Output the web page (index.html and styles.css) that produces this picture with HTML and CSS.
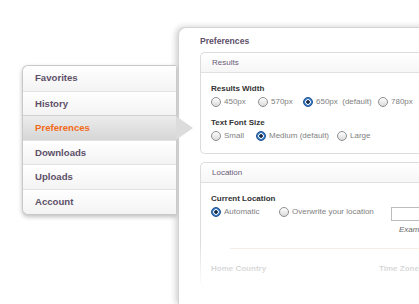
FILE: index.html
```html
<!DOCTYPE html>
<html>
<head>
    <title>Preferences</title>
    <link rel="stylesheet" href="styles.css">
</head>
<body>
    <div class="stage">
        <!-- Left navigation -->
        <ul class="nav">
            <li>Favorites</li>
            <li>History</li>
            <li class="active">Preferences</li>
            <li>Downloads</li>
            <li>Uploads</li>
            <li>Account</li>
        </ul>

        <!-- Preferences panel -->
        <div class="panel">
            <h1>Preferences</h1>

            <div class="box">
                <div class="box-head">Results</div>
                <div class="box-body">
                    <div class="field">
                        <h3>Results Width</h3>
                        <div class="options">
                            <span class="opt w1"><i class="radio"></i>450px</span>
                            <span class="opt w2"><i class="radio"></i>570px</span>
                            <span class="opt w3"><i class="radio on"></i>650px&nbsp;&nbsp;(default)</span>
                            <span class="opt"><i class="radio"></i>780px</span>
                        </div>
                    </div>
                    <div class="field">
                        <h3>Text Font Size</h3>
                        <div class="options">
                            <span class="opt w4"><i class="radio"></i>Small</span>
                            <span class="opt w5"><i class="radio on"></i>Medium (default)</span>
                            <span class="opt"><i class="radio"></i>Large</span>
                        </div>
                    </div>
                </div>
            </div>

            <div class="box">
                <div class="box-head">Location</div>
                <div class="box-body">
                    <div class="field">
                        <h3>Current Location</h3>
                        <div class="options loc">
                            <span class="opt w6"><i class="radio on"></i>Automatic</span>
                            <span class="opt w7"><i class="radio"></i>Overwrite your location</span>
                            <div class="loc-input">
                                <input type="text">
                                <em>Example</em>
                            </div>
                        </div>
                    </div>
                    <hr class="sep">
                    <div class="cols">
                        <h3>Home Country</h3>
                        <h3>Time Zone</h3>
                    </div>
                </div>
            </div>
            <div class="fade"></div>
        </div>
    </div>
</body>
</html>
```

FILE: styles.css
```css
/* General Reset */
* {
    margin: 0;
    padding: 0;
    box-sizing: border-box;
}
body {
    font-family: 'Liberation Sans', Arial, sans-serif;
    background: #ffffff;
    width: 419px;
    height: 304px;
    overflow: hidden;
}
.stage {
    display: flex;
    align-items: flex-start;
    padding-left: 22px;
}

/* Navigation */
.nav {
    list-style: none;
    width: 154px;
    flex-shrink: 0;
    margin-top: 65px;
    background: #fafafa;
    border: 1px solid #c9c9c9;
    border-right: none;
    border-radius: 6px 0 0 6px;
    box-shadow: 0 2px 4px rgba(0, 0, 0, 0.25);
    position: relative;
    z-index: 2;
}
.nav li {
    height: 24.6px;
    line-height: 24px;
    padding-left: 12px;
    font-size: 9.6px;
    font-weight: bold;
    color: #5d4f68;
    border-top: 1px solid #e2e2e2;
    background: linear-gradient(#ffffff, #f3f3f3);
    position: relative;
}
.nav li:first-child {
    border-top: none;
    border-radius: 6px 0 0 0;
}
.nav li:last-child {
    border-radius: 0 0 0 6px;
}
.nav li.active {
    color: #f26a1b;
    background: linear-gradient(#ececec, #d6d6d6);
    border-top-color: #d0d0d0;
}
.nav li.active::after {
    content: '';
    position: absolute;
    right: -17px;
    top: 0;
    border-left: 17px solid #dcdcdc;
    border-top: 12px solid transparent;
    border-bottom: 12px solid transparent;
}

/* Panel */
.panel {
    position: relative;
    margin-top: 27px;
    margin-left: 2px;
    width: 300px;
    height: 277px;
    flex-shrink: 0;
    background: #ffffff;
    border: 1px solid #d4d4d4;
    border-right: none;
    border-bottom: none;
    border-radius: 8px 0 0 0;
    box-shadow: -2px 0 6px rgba(0, 0, 0, 0.2);
    padding: 7px 0 0 21px;
    overflow: hidden;
}
.panel h1 {
    font-size: 8.6px;
    line-height: 12px;
    font-weight: bold;
    color: #5d4f68;
    margin-bottom: 5px;
}
.box {
    border: 1px solid #dcdcdc;
    border-right: none;
    border-radius: 5px 0 0 5px;
    margin-bottom: 8px;
}
.box-head {
    height: 20px;
    line-height: 19px;
    padding-left: 11px;
    font-size: 8px;
    color: #6a5a78;
    background: linear-gradient(#ffffff, #f6f6f6);
    border-bottom: 1px solid #e0e0e0;
    border-radius: 5px 0 0 0;
}
.box-body {
    padding: 10px 0 11px 10px;
}
.field h3 {
    font-size: 8px;
    font-weight: bold;
    color: #333333;
    line-height: 12px;
}
.field + .field {
    margin-top: 9px;
}
.options {
    display: flex;
    align-items: center;
    margin-top: 1px;
    font-size: 8px;
    color: #7f7f7f;
    line-height: 12px;
}
.opt {
    display: inline-flex;
    align-items: center;
    gap: 3px;
    white-space: nowrap;
}
.w1 { width: 47px; }
.w2 { width: 45px; }
.w3 { width: 75px; }
.w4 { width: 45px; }
.w5 { width: 81px; }
.w6 { width: 68px; }
.w7 { width: 112px; }

.radio {
    display: inline-block;
    width: 10px;
    height: 10px;
    border-radius: 50%;
    border: 1px solid #8f8f8f;
    background: linear-gradient(#ffffff, #dadada);
}
.radio.on {
    border-color: #1d4f8c;
    background: radial-gradient(circle, #1a2c4a 0 1.5px, #e9f1fb 2px 2.6px, #3d7ac6 3px);
}

/* Location */
.loc {
    align-items: flex-start;
}
.loc-input {
    display: flex;
    flex-direction: column;
    margin-top: 1px;
}
.loc-input input {
    width: 40px;
    height: 14px;
    border: 1px solid #bdbdbd;
    border-right: none;
}
.loc-input em {
    font-size: 8px;
    line-height: 12px;
    color: #666666;
    margin-top: 3px;
    margin-left: 8px;
    white-space: nowrap;
}
.sep {
    border: none;
    border-top: 1px solid #f6eadf;
    margin: 12px 0 14px 19px;
}
.cols {
    display: flex;
}
.cols h3 {
    font-size: 8px;
    line-height: 12px;
    font-weight: bold;
    color: #9a9a9a;
    white-space: nowrap;
}
.cols h3:first-child {
    width: 168px;
}

/* Bottom fade */
.fade {
    position: absolute;
    left: 0;
    right: 0;
    top: 214px;
    height: 70px;
    background: linear-gradient(rgba(255, 255, 255, 0), rgba(255, 255, 255, 0.6) 26px, #ffffff 46px);
}
```
